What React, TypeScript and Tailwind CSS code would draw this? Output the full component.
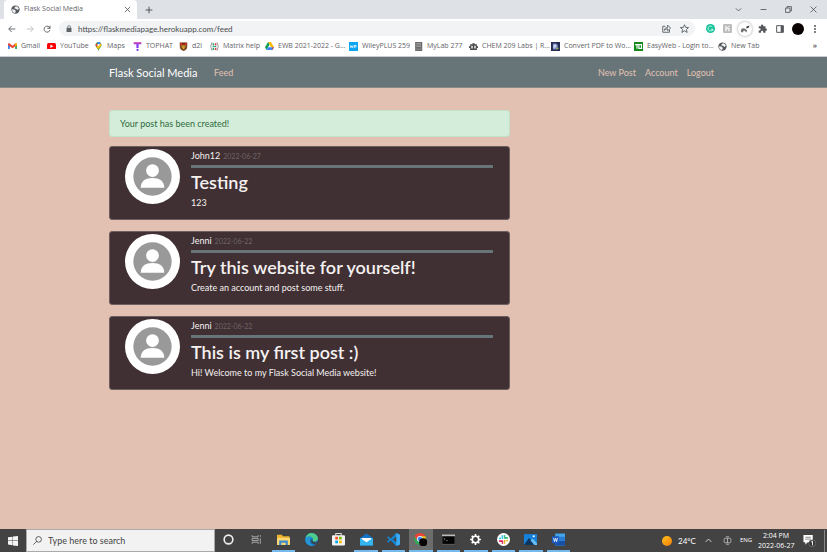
import React from "react";

type Post = { author: string; date: string; title: string; body: string };

const posts: Post[] = [
  { author: "John12", date: "2022-06-27", title: "Testing", body: "123" },
  { author: "Jenni", date: "2022-06-22", title: "Try this website for yourself!", body: "Create an account and post some stuff." },
  { author: "Jenni", date: "2022-06-22", title: "This is my first post :)", body: "Hi! Welcome to my Flask Social Media website!" },
];

function Globe() {
  return (
    <svg viewBox="0 0 24 24" className="size-[9px] shrink-0">
      <circle cx="12" cy="12" r="11" fill="#54585d" />
      <path d="M3 11l6 1 4 4-2 5C6 21 2 17 3 11zM13 3c4 0 7 3 8 7l-4 3-4-3-4-1 1-4 3-1z" fill="#eef0f2" />
    </svg>
  );
}

const bookmarks: { label: string; icon: React.ReactNode }[] = [
  {
    label: "Gmail",
    icon: (
      <svg viewBox="0 0 24 18" className="w-[9px] shrink-0">
        <path d="M0 3v15h5V7z" fill="#4285f4" />
        <path d="M24 3v15h-5V7z" fill="#34a853" />
        <path d="M0 2l3-2 9 7 9-7 3 2v3l-12 9L0 5z" fill="#ea4335" />
        <path d="M19 2l3-2 2 2v4l-5 3z" fill="#fbbc04" />
      </svg>
    ),
  },
  {
    label: "YouTube",
    icon: (
      <svg viewBox="0 0 24 17" className="w-[9px] shrink-0">
        <rect width="24" height="17" rx="4" fill="#f00" />
        <path d="M9 4v9l8-4.500z" fill="#fff" />
      </svg>
    ),
  },
  {
    label: "Maps",
    icon: (
      <svg viewBox="0 0 24 24" className="size-[9px] shrink-0">
        <path d="M12 0C7 0 4 4 4 8c0 6 6 8 8 16 2-8 8-10 8-16 0-4-3-8-8-8z" fill="#34a853" />
        <path d="M4 8l2-5 5 4-5 6z" fill="#ea4335" />
        <path d="M6 13L18 3l2 6-9 10z" fill="#fbbc04" />
        <path d="M8 1l4-1c3 0 5 1 6 3l-6 5z" fill="#4285f4" />
        <circle cx="12" cy="8" r="3" fill="#fff" />
      </svg>
    ),
  },
  {
    label: "TOPHAT",
    icon: (
      <svg viewBox="0 0 24 24" className="size-[9px] shrink-0">
        <path d="M2 1h20v5h-7v10H9V6H2z" fill="#8a3ff0" />
        <path d="M2 1h20v3H2z" fill="#e0409c" />
        <circle cx="12" cy="21" r="3" fill="#7a3ff0" />
      </svg>
    ),
  },
  {
    label: "d2l",
    icon: (
      <svg viewBox="0 0 24 24" className="size-[9px] shrink-0">
        <path d="M2 1h20v12c0 6-6 9-10 11C8 22 2 19 2 13z" fill="#7b4a25" />
        <path d="M3 2h18v6H3z" fill="#c22f22" />
        <path d="M6 9h12l-2 6-4 4-4-4z" fill="#e5a82c" />
        <path d="M8 4h8v2H8zM9 12h2v2H9zM13 12h2v2h-2z" fill="#3d2010" />
      </svg>
    ),
  },
  {
    label: "Matrix help",
    icon: (
      <svg viewBox="0 0 24 24" className="size-[9px] shrink-0" fill="none" strokeWidth="2">
        <path d="M5 1Q-1 12 5 23M19 1q6 11 0 22" stroke="#777" />
        <path d="M9 3v6M9 15v6" stroke="#28a06c" strokeWidth="4" />
        <path d="M15 3v6M15 15v6" stroke="#d44" strokeWidth="4" />
        <path d="M7 12h10" stroke="#3a9" strokeWidth="3" />
      </svg>
    ),
  },
  {
    label: "EWB 2021-2022 - G...",
    icon: (
      <svg viewBox="0 0 24 22" className="w-[9px] shrink-0">
        <path d="M8 0h8l8 14h-8z" fill="#fbbc04" />
        <path d="M8 0l4 7L4 21 0 14z" fill="#0f9d58" />
        <path d="M8 14h16l-4 7H4z" fill="#4285f4" />
        <path d="M19 14h5l-4 7z" fill="#ea4335" />
      </svg>
    ),
  },
  {
    label: "WileyPLUS 259",
    icon: (
      <svg viewBox="0 0 24 24" className="size-[9px] shrink-0">
        <rect width="24" height="24" fill="#0ba4ef" />
        <path d="M3 9l2 6 2-5 2 5 2-6M14 16V9h5v4h-5" stroke="#fff" strokeWidth="2" fill="none" />
      </svg>
    ),
  },
  {
    label: "MyLab 277",
    icon: (
      <svg viewBox="0 0 24 24" className="size-[9px] shrink-0">
        <rect x="3" width="19" height="24" fill="#6b6b6b" />
        <path d="M6 4h13M6 8h13M6 12h13" stroke="#aaa" strokeWidth="2" />
        <path d="M3 19h19" stroke="#999" strokeWidth="2" />
      </svg>
    ),
  },
  {
    label: "CHEM 209 Labs | R...",
    icon: (
      <svg viewBox="0 0 24 24" className="size-[9px] shrink-0">
        <path d="M3 6h6V3h6v3h6v5h3v5h-3v5H3v-5H0v-5h3z" fill="#4b4b4b" />
        <path d="M6 10h4v7H6zM14 10h4v7h-4z" fill="#eee" />
      </svg>
    ),
  },
  {
    label: "Convert PDF to Wo...",
    icon: (
      <svg viewBox="0 0 24 24" className="size-[9px] shrink-0">
        <rect width="24" height="24" fill="#252b50" />
        <path d="M5 4h9l4 4v12H5z" fill="#7488c4" />
        <path d="M8 17V8h5v5H8" stroke="#fff" strokeWidth="2" fill="none" />
        <path d="M14 15h6v4h-6z" fill="#9cb34b" />
      </svg>
    ),
  },
  {
    label: "EasyWeb - Login to...",
    icon: (
      <svg viewBox="0 0 24 24" className="size-[9px] shrink-0">
        <rect width="24" height="24" fill="#128a1c" />
        <path d="M3 7h17v10h-7V7M8 7v11" stroke="#fff" strokeWidth="3" fill="none" />
      </svg>
    ),
  },
  { label: "New Tab", icon: <Globe /> },
];

function Line({ d, label, className = "" }: { d: string; label: string; className?: string }) {
  return (
    <button type="button" aria-label={label} className={`shrink-0 ${className}`}>
      <svg viewBox="0 0 24 24" className="size-full" fill="none" stroke="currentColor" strokeWidth="2.500">
        <path d={d} />
      </svg>
    </button>
  );
}

function Browser() {
  return (
    <header className="text-[7px] text-[#5f6368]">
      <div className="flex h-[19px] items-center bg-[#dee1e6]">
        <div className="ml-1 flex h-full w-[133px] items-center gap-1 rounded-t-[4px] bg-white pr-[6px] pl-[7px]">
          <Globe />
          <span className="flex-1 whitespace-nowrap">Flask Social Media</span>
          <Line label="Close tab" d="M3 3l18 18M21 3L3 21" className="size-[7px] text-[#3c4043]" />
        </div>
        <Line label="New tab" d="M12 2v20M2 12h20" className="ml-2 size-[8px] text-[#3c4043]" />
        <div className="ml-auto flex items-center gap-[18px] pr-[10px] text-[#3c4043]">
          <Line label="Search tabs" d="M3 8l9 9 9-9" className="size-[7px]" />
          <Line label="Minimize" d="M2 12h20" className="size-[7px]" />
          <Line label="Restore" d="M2 7h15v15H2zM7 7V2h15v15h-5" className="size-[7px]" />
          <Line label="Close window" d="M2 2l20 20M22 2L2 22" className="size-[7px]" />
        </div>
      </div>
      <div className="flex h-[19px] items-center bg-white pr-[11px] pl-2">
        <Line label="Back" d="M22 12H3M11 3l-9 9 9 9" className="size-[8px] text-[#4b4f53]" />
        <Line label="Forward" d="M2 12h19M13 3l9 9-9 9" className="ml-[10px] size-[8px] text-[#b4b6b9]" />
        <Line label="Reload" d="M21 10a9 9 0 1 0 0 5M21 2v8h-8" className="mr-2 ml-[9px] size-[8px] text-[#4b4f53]" />
        <div className="flex h-[15px] min-w-0 flex-1 items-center rounded-full bg-[#f1f3f4] pr-[6px] pl-[7px]">
          <svg viewBox="0 0 16 20" className="mr-[6px] h-[7px] w-[6px] shrink-0">
            <path d="M1 8h14v12H1z" fill="#5f6368" />
            <path d="M4 8V5q0-3 4-3t4 3v3" stroke="#5f6368" strokeWidth="2" fill="none" />
          </svg>
          <input
            aria-label="Address"
            defaultValue="https://flaskmediapage.herokuapp.com/feed"
            className="h-[13px] min-w-0 flex-1 bg-transparent font-['Lato',sans-serif] text-[8px] text-[#4a4d51] outline-none"
          />
          <Line label="Share" d="M9 6H2v16h18v-6M6 17q1-8 9-8V3l8 8-8 7v-5q-6 0-9 4" className="size-[9px]" />
          <Line label="Bookmark this page" d="M12 2l3 7 8 .5-6 5 2 8-7-4.500-7 4.500 2-8-6-5L9 9z" className="ml-[9px] size-[9px]" />
        </div>
        <div className="flex items-center gap-2 pl-[11px]">
          <button type="button" aria-label="Grammarly">
            <svg viewBox="0 0 24 24" className="size-[9px]">
              <circle cx="12" cy="12" r="12" fill="#15c39a" />
              <path d="M17 8a6.500 6.500 0 1 0 1 6h-5M18 14v4" stroke="#fff" strokeWidth="2" fill="none" />
            </svg>
          </button>
          <button type="button" aria-label="Honey">
            <svg viewBox="0 0 24 24" className="size-[9px]">
              <rect width="24" height="24" rx="3" fill="#bdbdbd" />
              <path d="M8 5v14M8 13q4-4 8 0v6M16 5v3" stroke="#fff" strokeWidth="3" fill="none" />
            </svg>
          </button>
          <button type="button" aria-label="Extension" className="-mx-[2px] size-[14px] rounded-full bg-white shadow-[0_0_3px_#999]">
            <svg viewBox="0 0 24 24" className="size-full">
              <path d="M5 13q4-4 8-1l3 3-2 3-2-3-3 1-1 2-3-1z" fill="#777" />
              <path d="M14 8l6-2-2 4-3 1z" fill="#333" />
            </svg>
          </button>
          <button type="button" aria-label="Extensions">
            <svg viewBox="0 0 24 24" className="size-[9px]" fill="#54585d">
              <path d="M2 6h6V4a3 3 0 0 1 6 0v2h6v6h1a3 3 0 0 1 0 6h-1v5h-6v-2a3 3 0 0 0-6 0v2H2v-6h2a3 3 0 0 0 0-6H2z" />
            </svg>
          </button>
          <button type="button" aria-label="Side panel" className="ml-[1px]">
            <svg viewBox="0 0 24 24" className="size-[8px]">
              <path d="M2 2h20v20H2z" fill="none" stroke="#54585d" strokeWidth="3" />
              <path d="M14 2h8v20h-8z" fill="#54585d" />
            </svg>
          </button>
          <button type="button" aria-label="Profile" className="mr-[2px] size-3 rounded-full bg-[#080000]" />
          <button type="button" aria-label="Menu">
            <svg viewBox="0 0 4 16" className="h-2 w-[2px]" fill="#54585d">
              <circle cx="2" cy="2" r="2" /><circle cx="2" cy="8" r="2" /><circle cx="2" cy="14" r="2" />
            </svg>
          </button>
        </div>
      </div>
      <nav aria-label="Bookmarks" className="flex h-[19px] items-center justify-between border-b border-[#c9cdd0] bg-white pr-[10px] pb-[2px] pl-2">
        <div className="grid grid-cols-[39px_47px_39px_46px_31px_55px_84px_65px_55px_82px_83px_84px_auto]">
          {bookmarks.map((b) => (
            <a key={b.label} href="#bookmark" className="flex items-center gap-1 whitespace-nowrap">
              {b.icon}
              {b.label}
            </a>
          ))}
        </div>
        <button type="button" aria-label="More bookmarks" className="font-bold">»</button>
      </nav>
    </header>
  );
}

function PostCard({ post }: { post: Post }) {
  return (
    <article className="flex h-[74px] gap-[11px] rounded-[3px] border border-[#6b5f60] bg-[#403033] pt-[2px] pr-4 pl-[15px] text-[#f5f1f1]">
      <svg viewBox="0 0 56 56" className="size-[55px] shrink-0" role="img" aria-label={post.author}>
        <circle cx="28" cy="28" r="28" fill="#fff" />
        <circle cx="28" cy="28" r="19.500" fill="#999" />
        <circle cx="28" cy="22" r="6.500" fill="#fff" />
        <path d="M16 39.500c0-7 5-10 12-10s12 3 12 10z" fill="#fff" />
      </svg>
      <div className="min-w-0 flex-1">
        <div className="flex h-[19px] items-baseline gap-[3px] border-b-[3px] border-[#687578] leading-[14px]">
          <a href="#user" className="text-[9px]">{post.author}</a>
          <small className="text-[7px] text-[#6c6467]">{post.date}</small>
        </div>
        <h2 className="mt-[2px] text-[18px] leading-6 font-semibold whitespace-nowrap">{post.title}</h2>
        <p className="mt-[3px] text-[9px] leading-3">{post.body}</p>
      </div>
    </article>
  );
}

const apps: { name: string; state: "idle" | "open" | "active"; icon: React.ReactNode }[] = [
  { name: "Cortana", state: "idle", icon: <circle cx="12" cy="12" r="8" fill="none" stroke="#eee" strokeWidth="3" /> },
  {
    name: "Task View", state: "idle",
    icon: <path d="M4 4v3h11V4M4 20v-3h11v3M4 10h11v4H4zM19 4v3M19 10v10" fill="none" stroke="#bbb" strokeWidth="1.500" />,
  },
  {
    name: "File Explorer", state: "open",
    icon: (<><path d="M0 3h9l2 3h12v16H0z" fill="#eeb52f" /><path d="M0 9h24v13H0z" fill="#fbd872" /><path d="M4 22v-8h16v8h-4v-4H8v4z" fill="#3c8bcb" /></>),
  },
  {
    name: "Edge", state: "idle",
    icon: (<><circle cx="12" cy="12" r="12" fill="#1574bf" /><path d="M1 9C3 3 7 0 12 0c8 0 12 6 12 10 0 5-6 7-10 5 3-6-3-10-13-6z" fill="#4fcb8c" /><path d="M1 9c5-5 12-3 13 1-4-1-6 1-5 6 1 4 4 6 8 7C7 26-1 19 1 9z" fill="#2496d4" /><path d="M14 15c3 3 7 2 9 0-1 4-5 6-8 5-4-1-5-6-2-8z" fill="#404040" /></>),
  },
  {
    name: "Store", state: "idle",
    icon: (<><path d="M7 5V1h10v4" fill="none" stroke="#ddd" strokeWidth="2" /><rect y="4" width="24" height="19" rx="2" fill="#f3f3f3" /><path d="M6 7h5v5H6z" fill="#f25022" /><path d="M13 7h5v5h-5z" fill="#7fba00" /><path d="M6 14h5v5H6z" fill="#00a4ef" /><path d="M13 14h5v5h-5z" fill="#ffb900" /></>),
  },
  {
    name: "Mail", state: "open",
    icon: (<><path d="M0 9l12-8 12 8v14H0z" fill="#1374c5" /><path d="M3 9h18v3l-9 6-9-6z" fill="#fff" /><path d="M0 9l12 8 12-8v14H0z" fill="#35b5ef" /></>),
  },
  {
    name: "Visual Studio Code", state: "open",
    icon: (<><path d="M17 0l7 3v18l-7 3L7 14l-5 4-2-2 4-4-4-4 2-2 5 4z" fill="#1583cf" /><path d="M17 0l7 3v18l-7 3z" fill="#3caaf2" /><path d="M17 7v10l-6-5z" fill="#434343" /></>),
  },
  {
    name: "Chrome", state: "active",
    icon: (<><circle cx="11" cy="11" r="11" fill="#34a853" /><path d="M1 6C4 1 7 0 11 0c5 0 8 2 10 6H11l-5 8z" fill="#ea4335" /><path d="M11 6h10c3 7-1 15-9 16l5-8z" fill="#fbbc04" /><circle cx="11" cy="11" r="5" fill="#4285f4" stroke="#fff" strokeWidth="1.500" /><circle cx="17" cy="17" r="7.500" fill="#090000" /></>),
  },
  {
    name: "Terminal", state: "open",
    icon: (<><path d="M0 3h24v18H0z" fill="#050505" stroke="#888" /><path d="M0 3h24v3H0z" fill="#bbb" /><path d="M3 9l3 2-3 2M7 14h4" stroke="#999" fill="none" /></>),
  },
  {
    name: "Settings", state: "open",
    icon: (<><circle cx="12" cy="12" r="6" fill="none" stroke="#fff" strokeWidth="3" /><path d="M12 2v4M12 18v4M2 12h4M18 12h4M5 5l3 3M16 16l3 3M19 5l-3 3M8 16l-3 3" stroke="#fff" strokeWidth="3" /></>),
  },
  {
    name: "Slack", state: "open",
    icon: (<><circle cx="12" cy="12" r="12" fill="#fff" /><g strokeWidth="3" strokeLinecap="round"><path d="M10 5v5M5 10h1" stroke="#36c5f0" /><path d="M14 9h5M14 5v1" stroke="#2eb67d" /><path d="M14 14v5M18 14h1" stroke="#ecb22e" /><path d="M5 15h5M10 18v1" stroke="#e01e5a" /></g></>),
  },
  {
    name: "Photos", state: "open",
    icon: (<><path d="M0 2h24v20H0z" fill="#1681d8" /><path d="M0 22L9 9l13 13z" fill="#0d365f" /><path d="M12 14l4-4 8 9v3h-5z" fill="#65bdf2" /><circle cx="18" cy="6" r="2" fill="#fff" /></>),
  },
  {
    name: "Word", state: "open",
    icon: (<><path d="M6 1h18v22H6z" fill="#41a5ee" /><path d="M6 7h18v16H6z" fill="#2b7cd3" /><path d="M6 15h18v8H6z" fill="#174fa5" /><path d="M0 6h13v13H0z" fill="#185abd" /><path d="M3 9l1.500 7 2-6 2 6L10 9" stroke="#fff" strokeWidth="1.500" fill="none" /></>),
  },
];

const stateClass = {
  idle: "border-transparent",
  open: "border-[#76b9ed]",
  active: "border-[#76b9ed] bg-[#6c6c6c]",
};

function Taskbar() {
  return (
    <footer className="flex h-[23px] items-stretch bg-[#434343] text-[7px] text-white">
      <button type="button" aria-label="Start" className="flex w-[26px] shrink-0 items-center justify-center">
        <svg viewBox="0 0 24 24" className="size-[10px]" fill="#f4f4f4">
          <path d="M0 3l11-1.500V11H0zM12 1.300L24 0v11H12zM0 12h11v10L0 20.500zM12 12h12v12l-12-1.500z" />
        </svg>
      </button>
      <label className="flex w-[189px] shrink-0 items-center gap-[6px] border border-[#aaa] bg-[#f2f2f2] pl-[6px]">
        <svg viewBox="0 0 24 24" className="size-[9px] shrink-0" fill="none" stroke="#333" strokeWidth="2">
          <circle cx="15" cy="9" r="7.500" /><path d="M10 14L1 23" />
        </svg>
        <input aria-label="Search" placeholder="Type here to search" className="min-w-0 flex-1 bg-transparent font-['Lato',sans-serif] text-[9px] outline-none placeholder:text-[#444]" />
      </label>
      <div className="grid w-[357px] shrink-0 grid-cols-13">
        {apps.map((a) => (
          <button key={a.name} type="button" aria-label={a.name} className={`mx-[2px] flex items-center justify-center border-b-2 ${stateClass[a.state]}`}>
            <svg viewBox="0 0 24 24" className="size-[13px]">{a.icon}</svg>
          </button>
        ))}
      </div>
      <div className="ml-auto flex items-center pr-[2px]">
        <span className="mr-[6px] size-[10px] rounded-full bg-linear-to-br from-[#ffc21c] to-[#f27a0a]" />
        <span className="w-[27px] font-['Lato',sans-serif] text-[8px]">24°C</span>
        <Line label="Show hidden icons" d="M2 17L12 7l10 10" className="mr-[11px] size-[7px]" />
        <svg viewBox="0 0 24 24" className="mr-2 size-[9px]" fill="none" stroke="#ccc" strokeWidth="2">
          <rect x="3" y="6" width="18" height="12" rx="3" /><path d="M12 6v12M8 2h8M8 22h8" />
        </svg>
        <span className="w-[18px] text-[6px]">ENG</span>
        <time className="w-[36px] text-center leading-[10px] whitespace-nowrap">2:04 PM<br />2022-06-27</time>
        <button type="button" aria-label="Notifications, 1 new" className="mr-2 ml-[9px]">
          <svg viewBox="0 0 28 28" className="size-[13px]">
            <path d="M1 2h20v16H10l-5 5v-5H1z" fill="#fff" />
            <path d="M5 7h12M5 11h12" stroke="#555" strokeWidth="1.500" />
            <circle cx="20" cy="20" r="7.500" fill="#333" stroke="#999" />
            <path d="M17.500 17.500l3-2v9" stroke="#fff" strokeWidth="2" fill="none" />
          </svg>
        </button>
        <span className="h-[22px] w-px bg-[#888]" />
      </div>
    </footer>
  );
}

export default function App() {
  return (
    <div className="flex min-h-screen flex-col bg-[#e2c1b3] font-['Open_Sans','Noto_Sans',sans-serif]">
      <Browser />
      <nav aria-label="Site" className="h-[31px] border-b border-[#8a8a88] bg-[#687578]">
        <div className="mx-auto flex h-full max-w-[609px] items-center pt-[2px] font-['Lato',sans-serif] text-[9px] text-[#e2c1b3]">
          <a href="#home" className="w-[105px] text-[11px] whitespace-nowrap text-white">Flask Social Media</a>
          <a href="#feed">Feed</a>
          <div className="ml-auto flex gap-[9px] pr-1">
            <a href="#new">New Post</a>
            <a href="#account">Account</a>
            <a href="#logout">Logout</a>
          </div>
        </div>
      </nav>
      <main className="mx-auto w-full max-w-[609px] flex-1 pt-[22px] font-['Lato',sans-serif]">
        <div className="flex w-2/3 flex-col gap-[11px] pr-[5px]">
          <div role="status" className="-mb-[2px] flex h-[27px] items-center rounded-[3px] border border-[#c3e0c8] bg-[#d4edda] pl-[10px] text-[9px] text-[#2f6b3d]">
            Your post has been created!
          </div>
          {posts.map((p) => <PostCard key={p.title} post={p} />)}
        </div>
      </main>
      <Taskbar />
    </div>
  );
}
